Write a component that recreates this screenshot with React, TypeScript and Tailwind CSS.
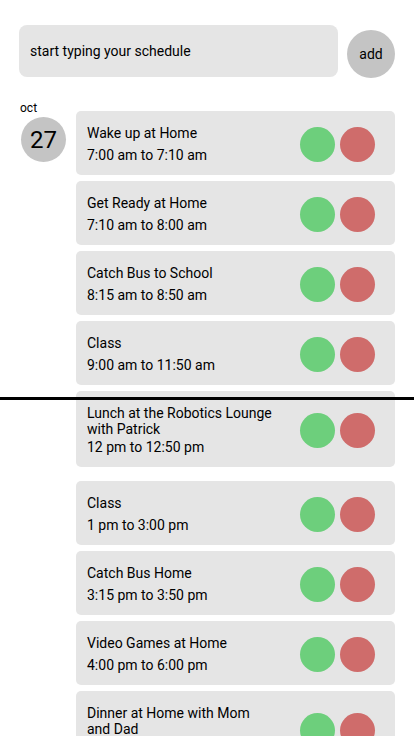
import React from 'react';

const items = [
  { id: 1, title: 'Wake up at Home', time: '7:00 am to 7:10 am' },
  { id: 2, title: 'Get Ready at Home', time: '7:10 am to 8:00 am' },
  { id: 3, title: 'Catch Bus to School', time: '8:15 am to 8:50 am' },
  { id: 4, title: 'Class', time: '9:00 am to 11:50 am' },
  { id: 5, title: 'Lunch at the Robotics Lounge with Patrick', time: '12 pm to 12:50 pm', long: true, now: true },
  { id: 6, title: 'Class', time: '1 pm to 3:00 pm' },
  { id: 7, title: 'Catch Bus Home', time: '3:15 pm to 3:50 pm' },
  { id: 8, title: 'Video Games at Home', time: '4:00 pm to 6:00 pm' },
  { id: 9, title: 'Dinner at Home with Mom and Dad', time: '6:00 pm to 7:00 pm', long: true },
];

const App = () => {
  return (
    <div className="relative min-h-[736px] bg-white text-black font-['Roboto',sans-serif]">
      <div className="flex items-start pt-[25px] pl-[19px]">
        <div className="w-[319px] h-[52px] rounded-[8px] bg-[#e5e5e5] flex items-center pl-[11px] text-[14px]">
          start typing your schedule
        </div>
        <button className="ml-[9px] mt-[5px] w-[48px] h-[48px] rounded-full bg-[#c4c4c4] flex items-center justify-center text-[14px]">
          add
        </button>
      </div>

      <div className="flex pt-[23px]">
        <div className="w-[76px] pl-[20px]">
          <div className="text-[12px] leading-[14px]">oct</div>
          <div className="mt-[2px] ml-[1px] w-[45px] h-[45px] rounded-full bg-[#c4c4c4] flex items-center justify-center text-[24px]">
            27
          </div>
        </div>
        <div className="w-[319px] pt-[10px] flex flex-col gap-[6px]">
          {items.map(item => (
            <div
              key={item.id}
              className={`min-h-[64px] rounded-[5px] bg-[#e5e5e5] flex items-center justify-between pl-[11px] pr-[20px] pt-[14px] pb-[12px] ${item.now ? 'mb-[8px]' : ''}`}
            >
              <div className="text-[14px] leading-[16px] w-[186px]">
                <div>{item.title}</div>
                <div className={item.long ? 'mt-[2px]' : 'mt-[6px]'}>{item.time}</div>
              </div>
              <div className="flex gap-[5px]">
                <div className="w-[35px] h-[35px] rounded-full bg-[#6dcf7c]" />
                <div className="w-[35px] h-[35px] rounded-full bg-[#cf6c6b]" />
              </div>
            </div>
          ))}
        </div>
      </div>

      <div className="absolute left-0 right-0 top-[397px] h-[3px] bg-black" />
    </div>
  );
};

export default App;
